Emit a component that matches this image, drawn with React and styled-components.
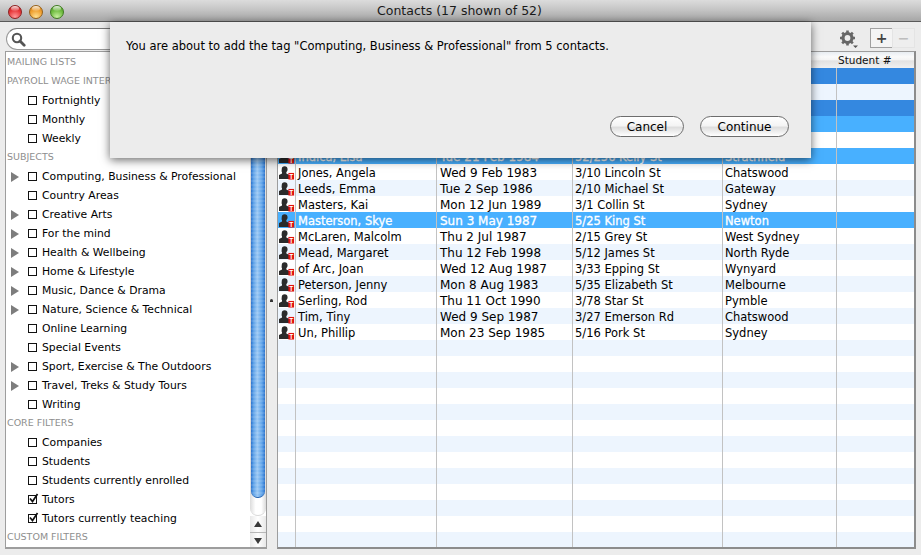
import React from "react";
import styled, { createGlobalStyle } from "styled-components";

const Global = createGlobalStyle`
  html, body { margin: 0; padding: 0; background: #ececec; }
  body { font-family: "DejaVu Sans", "Liberation Sans", sans-serif; }
  #root { width: 921px; height: 555px; overflow: hidden; }
`;

const Window = styled.div`
  position: relative;
  width: 921px;
  height: 555px;
  display: flex;
  flex-direction: column;
  background: #ececec;
  overflow: hidden;
`;
const TitleBar = styled.header`
  position: relative;
  flex: 0 0 22px;
  box-sizing: border-box;
  height: 22px;
  border-bottom: 1px solid #5a5a5a;
  background: linear-gradient(#dcdcdc, #c8c8c8 40%, #a6a6a6);
  display: flex;
  align-items: center;
  padding: 2px 0 0 8px;
  gap: 7px;
`;
const Light = styled.span`
  position: relative;
  width: 14px;
  height: 14px;
  border-radius: 50%;
  border: 1px solid ${(p) => p.$edge};
  box-sizing: border-box;
  background: radial-gradient(circle at 50% 90%, ${(p) => p.$glow} 0, ${(p) => p.$base} 55%, ${(p) => p.$top} 100%);
  &::after {
    content: "";
    position: absolute;
    left: 2px;
    right: 2px;
    top: 0;
    height: 5px;
    border-radius: 50%;
    background: linear-gradient(rgba(255, 255, 255, 0.85), rgba(255, 255, 255, 0.1));
  }
`;
const Title = styled.h1`
  position: absolute;
  left: 0;
  right: 2px;
  top: 2px;
  margin: 0;
  text-align: center;
  font-size: 12.5px;
  line-height: 18px;
  font-weight: 400;
  color: #1a1a1a;
`;
const Body = styled.div`
  flex: 1;
  display: grid;
  grid-template-columns: 262px 10px 639px;
  grid-template-rows: 29px 498px;
  padding-left: 5px;
`;
const SearchCell = styled.div`
  padding: 6px 0 0 1px;
`;
const Search = styled.div`
  box-sizing: border-box;
  width: 255px;
  height: 22px;
  border: 1px solid #9a9a9a;
  border-top-color: #777;
  border-radius: 11px;
  background: #fff;
  display: flex;
  align-items: center;
  padding-left: 4px;
`;
const Tools = styled.div`
  grid-column: 2 / 4;
  display: flex;
  justify-content: flex-end;
  align-items: flex-start;
  padding: 6px 1px 0 0;
`;
const Gear = styled.span`
  display: flex;
  margin: 1px 13px 0 0;
`;
const ToolBtn = styled.span`
  box-sizing: border-box;
  width: 23px;
  height: 20px;
  border: 1px solid ${(p) => (p.$off ? "#e4e4e4" : "#a0a0a0")};
  background: ${(p) => (p.$off ? "#eeeeee" : "#f4f4f4")};
  display: flex;
  align-items: center;
  justify-content: center;
  margin-left: -1px;
  font-size: 14px;
  line-height: 14px;
  font-weight: 700;
  color: ${(p) => (p.$off ? "#bdbdbd" : "#444")};
`;
const SideBox = styled.aside`
  box-sizing: border-box;
  border: 1px solid #9d9d9d;
  border-bottom: 2px solid #9d9d9d;
  background: #fff;
  display: flex;
  overflow: hidden;
  width: 262px;
`;
const List = styled.div`
  flex: 1;
  min-width: 0;
  padding-top: 1px;
`;
const Group = styled.div`
  height: 19px;
  line-height: 18px;
  padding-left: 1px;
  font-size: 9.5px;
  color: #8e8e8e;
  white-space: nowrap;
  overflow: hidden;
`;
const Item = styled.div`
  position: relative;
  height: 19px;
  display: flex;
  align-items: center;
  padding-left: 22px;
  font-size: 10.8px;
  color: #000;
  white-space: nowrap;
`;
const Arrow = styled.span`
  position: absolute;
  left: 5px;
  top: 5px;
  width: 0;
  height: 0;
  border-left: 8px solid #7d7d7d;
  border-top: 5px solid transparent;
  border-bottom: 5px solid transparent;
`;
const Check = styled.span`
  box-sizing: border-box;
  flex: 0 0 9px;
  width: 9px;
  height: 9px;
  margin-right: 5px;
  border: 1px solid #111;
  background: #fff;
  position: relative;
  display: block;
`;
const Tick = styled.svg`
  position: absolute;
  left: -1px;
  top: -3px;
`;
const Scrollbar = styled.div`
  flex: 0 0 16px;
  display: flex;
  flex-direction: column;
  background: #fff;
  box-sizing: border-box;
`;
const Track = styled.div`
  flex: 0 0 463px;
  border-radius: 0 0 8px 8px;
  background: linear-gradient(90deg, #dcdcdc, #fff 35%, #fff 70%, #dadada);
  border-bottom: 1px solid #d8d8d8;
`;
const Thumb = styled.div`
  height: 445px;
  margin: 0 1px 0 1px;
  border-radius: 0 0 7px 7px;
  background:
    repeating-linear-gradient(rgba(255, 255, 255, 0.1) 0 2px, rgba(255, 255, 255, 0) 2px 4px),
    linear-gradient(90deg, #2a72cc 0, #5ea2e8 18%, #9ac8f4 45%, #60a4ea 78%, #2a72cc 100%);
  border-bottom: 1px solid #1f5fae;
`;
const ScrollBtn = styled.div`
  flex: 0 0 16px;
  display: flex;
  align-items: center;
  justify-content: center;
  border-top: ${(p) => (p.$ruled ? "1px solid #b8b8b8" : "0")};
  box-sizing: border-box;
  background: linear-gradient(90deg, #e8e8e8, #fff 50%, #e8e8e8);
`;
const Tri = styled.span`
  width: 0;
  height: 0;
  border-left: 4px solid transparent;
  border-right: 4px solid transparent;
  ${(p) => (p.$up ? "border-bottom: 6px solid #3a3a3a;" : "border-top: 6px solid #3a3a3a;")}
`;
const Splitter = styled.div`
  display: flex;
  align-items: center;
  padding: 0 0 0 3px;
`;
const Dot = styled.span`
  width: 3px;
  height: 3px;
  background: #333;
  border-radius: 50% 50% 0 0;
`;
const TableBox = styled.section`
  box-sizing: border-box;
  width: 639px;
  border: 1px solid #9d9d9d;
  border-bottom: 2px solid #8c8c8c;
  border-right: 2px solid #8c8c8c;
  background: #fff;
  overflow: hidden;
`;
const Columns = "17px 141px 136px 150px 114px 78px";
const HeaderRow = styled.div`
  display: grid;
  grid-template-columns: ${Columns};
  height: 16px;
  background: linear-gradient(#e8edf2, #fafafa 30%, #f4f4f4 50%, #e2e2e2 55%, #f0f0f0);
`;
const HeaderCell = styled.div`
  box-sizing: border-box;
  padding-left: 2px;
  font-size: 10.5px;
  line-height: 16px;
  color: #111;
  white-space: nowrap;
  overflow: hidden;
`;
const Row = styled.div`
  display: grid;
  grid-template-columns: ${Columns};
  height: 16px;
  background: ${(p) =>
    p.$state === "dim" ? "#3488e0" : p.$state === "sel" ? "#48b0ff" : p.$alt ? "#edf5fe" : "#fff"};
  color: ${(p) => (p.$state ? "#fff" : "#000")};
  -webkit-text-stroke: ${(p) => (p.$state ? "0.3px #fff" : "0")};
`;
const Cell = styled.div`
  box-sizing: border-box;
  padding-left: 2px;
  border-left: 1px solid #c2c2c2;
  font-size: 11.5px;
  line-height: 18px;
  white-space: nowrap;
  overflow: hidden;
`;
const DateCell = styled(Cell)`
  padding-left: 3px;
  font-size: 12px;
`;
const IconCell = styled.div`
  display: flex;
  padding-left: 1px;
  overflow: hidden;
`;
const Sheet = styled.div`
  position: absolute;
  left: 110px;
  top: 22px;
  width: 701px;
  height: 136px;
  box-sizing: border-box;
  background: #ececec;
  box-shadow: 0 2px 9px rgba(0, 0, 0, 0.6);
  padding: 17px 16px 0;
  font-size: 11.5px;
  color: #000;
  display: flex;
  flex-direction: column;
`;
const SheetText = styled.p`
  margin: 0;
  line-height: 14px;
  flex: 1;
`;
const SheetActions = styled.div`
  display: flex;
  justify-content: flex-end;
  gap: 16px;
  padding: 0 6px 21px 0;
`;
const SheetBtn = styled.button`
  box-sizing: border-box;
  height: 21px;
  width: ${(p) => p.$w}px;
  border: 1px solid #6d6d6d;
  border-radius: 11px;
  background: linear-gradient(#fff, #f4f4f4 45%, #dedede 55%, #fff);
  font: 12px "DejaVu Sans", sans-serif;
  color: #000;
  padding: 0;
`;

const Person = () => (
  <svg width="17" height="16" viewBox="0 0 17 16">
    <path d="M6 2c2 0 3.100 1.400 3.100 3.200 0 1.300-.5 2.400-1.300 3.100v1.400l3.200 1.600V15.500H0v-4.200l3.200-1.600V8.300C2.400 7.600 2.900 6.500 2.900 5.200 2.900 3.400 4 2 6 2z" fill="#2b2b2b" />
    <rect x="10" y="9" width="6" height="7" fill="#e0140e" />
    <text x="13" y="15" textAnchor="middle" fontSize="7" fontWeight="700" fontFamily="Liberation Sans" fill="#fff">T</text>
  </svg>
);

const sidebar = [
  ["g", "MAILING LISTS"],
  ["g", "PAYROLL WAGE INTERVALS"],
  ["i", "Fortnightly"],
  ["i", "Monthly"],
  ["i", "Weekly"],
  ["g", "SUBJECTS"],
  ["a", "Computing, Business & Professional"],
  ["i", "Country Areas"],
  ["a", "Creative Arts"],
  ["a", "For the mind"],
  ["a", "Health & Wellbeing"],
  ["a", "Home & Lifestyle"],
  ["a", "Music, Dance & Drama"],
  ["a", "Nature, Science & Technical"],
  ["i", "Online Learning"],
  ["i", "Special Events"],
  ["a", "Sport, Exercise & The Outdoors"],
  ["a", "Travel, Treks & Study Tours"],
  ["i", "Writing"],
  ["g", "CORE FILTERS"],
  ["i", "Companies"],
  ["i", "Students"],
  ["i", "Students currently enrolled"],
  ["c", "Tutors"],
  ["c", "Tutors currently teaching"],
  ["g", "CUSTOM FILTERS"],
];

const rows = [
  { state: "dim" },
  {},
  { state: "dim" },
  { state: "sel" },
  {},
  { state: "sel", cells: ["Indica, Lisa", "Tue 21 Feb 1984", "52/256 Kelly St", "Strathfield"] },
  { cells: ["Jones, Angela", "Wed 9 Feb 1983", "3/10 Lincoln St", "Chatswood"] },
  { cells: ["Leeds, Emma", "Tue 2 Sep 1986", "2/10 Michael St", "Gateway"] },
  { cells: ["Masters, Kai", "Mon 12 Jun 1989", "3/1 Collin St", "Sydney"] },
  { state: "sel", cells: ["Masterson, Skye", "Sun 3 May 1987", "5/25 King St", "Newton"] },
  { cells: ["McLaren, Malcolm", "Thu 2 Jul 1987", "2/15 Grey St", "West Sydney"] },
  { cells: ["Mead, Margaret", "Thu 12 Feb 1998", "5/12 James St", "North Ryde"] },
  { cells: ["of Arc, Joan", "Wed 12 Aug 1987", "3/33 Epping St", "Wynyard"] },
  { cells: ["Peterson, Jenny", "Mon 8 Aug 1983", "5/35 Elizabeth St", "Melbourne"] },
  { cells: ["Serling, Rod", "Thu 11 Oct 1990", "3/78 Star St", "Pymble"] },
  { cells: ["Tim, Tiny", "Wed 9 Sep 1987", "3/27 Emerson Rd", "Chatswood"] },
  { cells: ["Un, Phillip", "Mon 23 Sep 1985", "5/16 Pork St", "Sydney"] },
];
while (rows.length < 30) rows.push({ empty: true });

export default function App() {
  return (
    <Window>
      <Global />
      <TitleBar>
        <Light $edge="#8c2020" $base="#e8383a" $glow="#ff9a9a" $top="#b01c1c" />
        <Light $edge="#94601a" $base="#f0a030" $glow="#ffe090" $top="#c87c18" />
        <Light $edge="#3f7a20" $base="#70bc40" $glow="#c8f0a0" $top="#4a9428" />
        <Title>Contacts (17 shown of 52)</Title>
      </TitleBar>
      <Body>
        <SearchCell>
          <Search>
            <svg width="15" height="15" viewBox="0 0 15 15">
              <circle cx="6" cy="6" r="4.2" fill="none" stroke="#555" strokeWidth="2.1" />
              <path d="M9 9l4.200 4.200" stroke="#555" strokeWidth="2.8" strokeLinecap="round" />
            </svg>
          </Search>
        </SearchCell>
        <Tools>
          <Gear>
            <svg width="19" height="20" viewBox="0 0 19 20">
              <circle cx="8.500" cy="9" r="4.500" fill="none" stroke="#666" strokeWidth="3.200" />
              <path d="M8.500 1.500v3M8.500 13.500v3M1 9h3M13 9h3M3.200 3.700l2.100 2.100M11.700 12.200l2.100 2.100M13.800 3.700l-2.100 2.100M5.300 12.200l-2.100 2.100" stroke="#666" strokeWidth="2.600" />
              <path d="M14 16.500h5l-2.500 2.500z" fill="#555" />
            </svg>
          </Gear>
          <ToolBtn>+</ToolBtn>
          <ToolBtn $off>−</ToolBtn>
        </Tools>
        <SideBox>
          <List>
            {sidebar.map(([kind, label]) =>
              kind === "g" ? (
                <Group key={label}>{label}</Group>
              ) : (
                <Item key={label}>
                  {kind === "a" && <Arrow />}
                  <Check>
                    {kind === "c" && (
                      <Tick width="11" height="11" viewBox="0 0 11 11">
                        <path d="M2 5.500l2.500 3L9.500 1" fill="none" stroke="#111" strokeWidth="1.700" />
                      </Tick>
                    )}
                  </Check>
                  {label}
                </Item>
              )
            )}
          </List>
          <Scrollbar>
            <Track><Thumb /></Track>
            <ScrollBtn><Tri $up /></ScrollBtn>
            <ScrollBtn $ruled><Tri /></ScrollBtn>
          </Scrollbar>
        </SideBox>
        <Splitter><Dot /></Splitter>
        <TableBox>
          <HeaderRow>
            <HeaderCell />
            <HeaderCell />
            <HeaderCell />
            <HeaderCell />
            <HeaderCell />
            <HeaderCell>Student #</HeaderCell>
          </HeaderRow>
          {rows.map((r, i) => {
            const c = r.cells || [];
            return (
              <Row key={i} $alt={i % 2 === 1} $state={r.state}>
                <IconCell>{r.cells && <Person />}</IconCell>
                <Cell>{c[0]}</Cell>
                <DateCell>{c[1]}</DateCell>
                <Cell>{c[2]}</Cell>
                <Cell>{c[3]}</Cell>
                <Cell />
              </Row>
            );
          })}
        </TableBox>
      </Body>
      <Sheet>
        <SheetText>You are about to add the tag "Computing, Business &amp; Professional" from 5 contacts.</SheetText>
        <SheetActions>
          <SheetBtn $w={74}>Cancel</SheetBtn>
          <SheetBtn $w={89}>Continue</SheetBtn>
        </SheetActions>
      </Sheet>
    </Window>
  );
}
